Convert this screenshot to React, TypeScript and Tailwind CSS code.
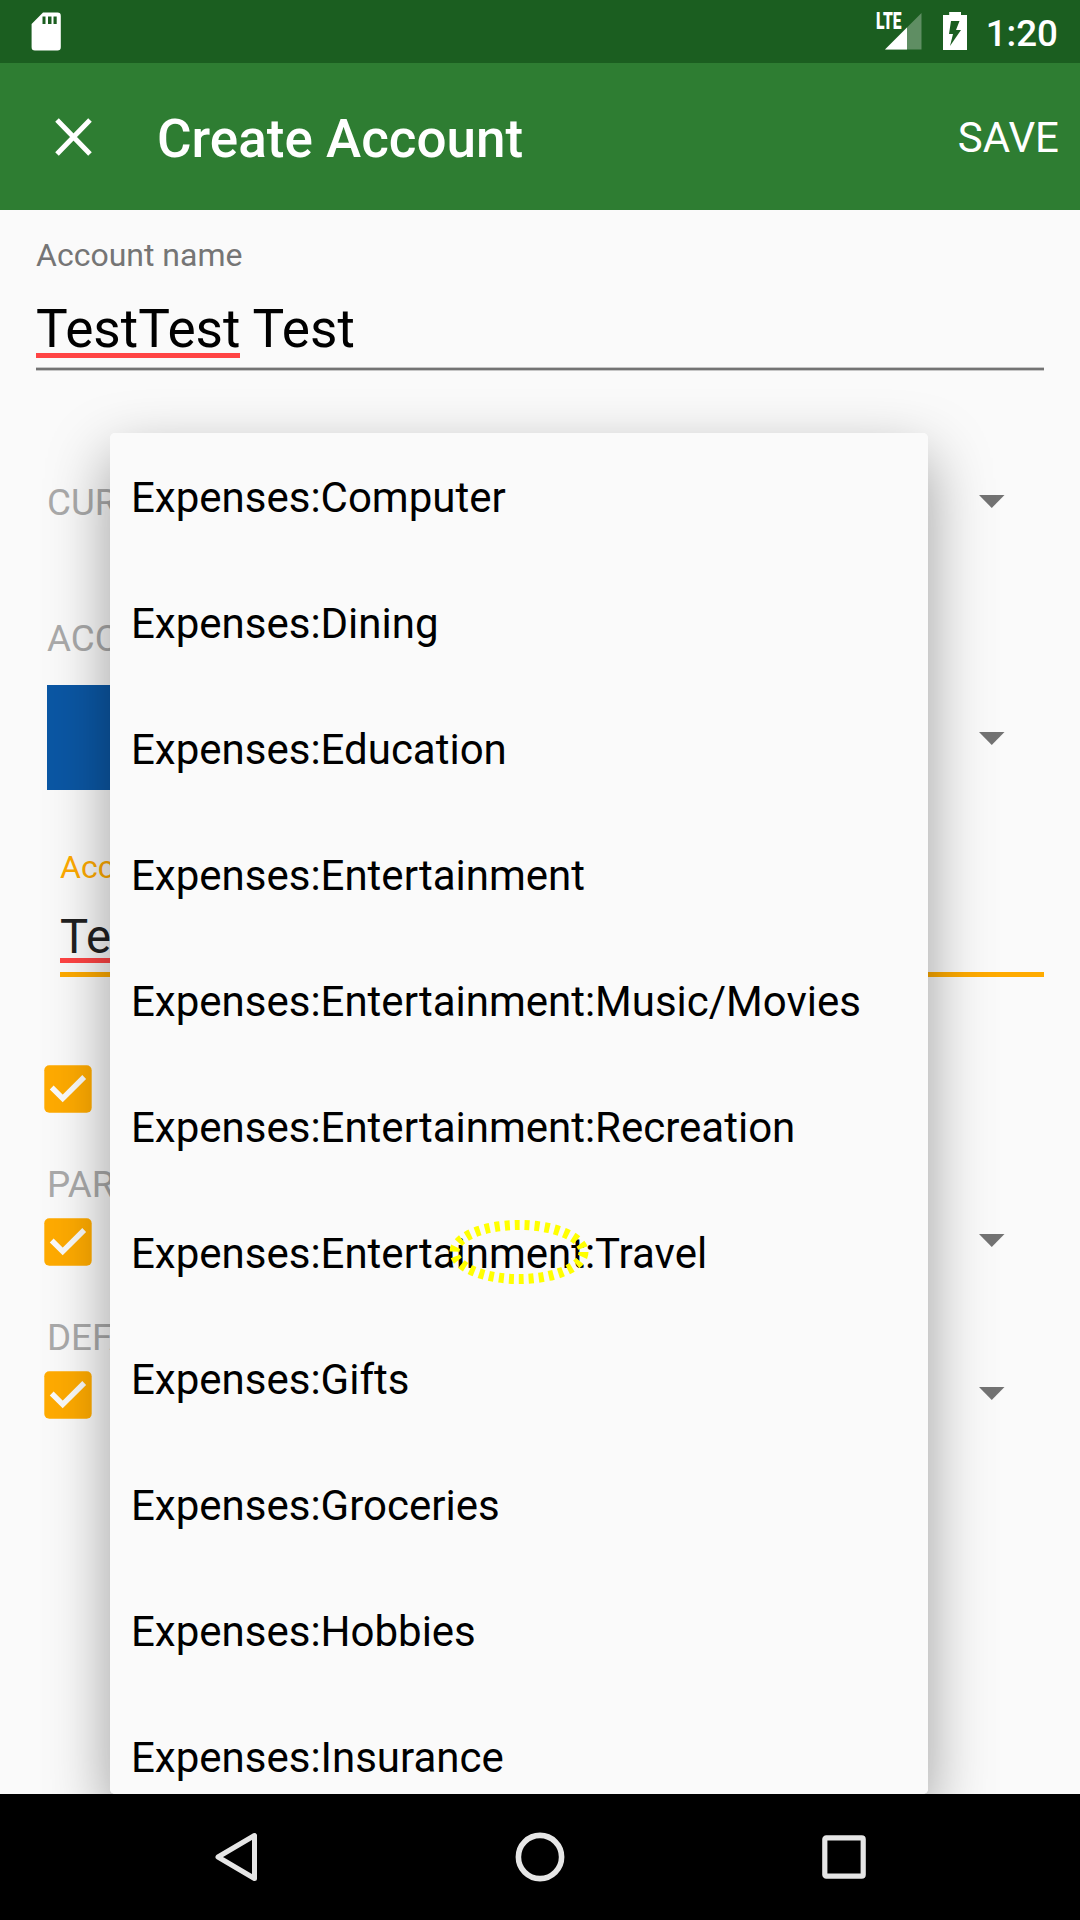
import React from "react";

const accounts = [
  "Expenses:Computer",
  "Expenses:Dining",
  "Expenses:Education",
  "Expenses:Entertainment",
  "Expenses:Entertainment:Music/Movies",
  "Expenses:Entertainment:Recreation",
  "Expenses:Entertainment:Travel",
  "Expenses:Gifts",
  "Expenses:Groceries",
  "Expenses:Hobbies",
  "Expenses:Insurance",
];

function StatusBar() {
  return (
    <div className="flex h-[63px] shrink-0 items-start bg-[#1b5e20] text-white">
      <svg className="ml-[31px] mt-[12px]" width="31" height="39" viewBox="0 0 31 39">
        <path
          fillRule="evenodd"
          fill="#fff"
          d="M12 .6H26.500a3.300 3.300 0 0 1 3.300 3.300V35.200a3.300 3.300 0 0 1-3.300 3.300H3.900a3.300 3.300 0 0 1-3.300-3.300V12ZM11.500 4.500V12H14.500V4.500ZM17 4.500V12h3.500V4.500ZM22.500 4.500V12H25.700V4.500Z"
        />
      </svg>
      <div className="relative ml-auto mr-[21px] mt-[12px] h-[39px] w-[46px]">
        <svg width="46" height="39" viewBox="0 0 46 39">
          <path d="M45.500 1V37.500H9Z" fill="#fff" fillOpacity=".3" />
          <path d="M31 15.500V37.500H9Z" fill="#fff" />
        </svg>
        <span className="absolute left-0 top-0 origin-left scale-x-[0.68] text-[23px] font-black leading-[20px]">LTE</span>
      </div>
      <svg className="mt-[12px]" width="24" height="38" viewBox="0 0 24 38">
        <path
          fillRule="evenodd"
          fill="#fff"
          d="M6.200 0H18V3H24V38H0V3H6.200ZM8 9 6 22H10L7 34 18 18H13L16.500 9Z"
        />
      </svg>
      <span className="ml-[19px] mr-[22px] mt-[12px] text-[36.750px] font-medium leading-[43px]">1:20</span>
    </div>
  );
}

function Caret({ className = "" }: { className?: string }) {
  return (
    <svg className={"shrink-0 " + className} width="26" height="13" viewBox="0 0 26 13">
      <path d="M0 0H25.500L12.750 13Z" fill="#737373" />
    </svg>
  );
}

function Checkbox() {
  return (
    <svg className="ml-[44px] block" width="48" height="48" viewBox="0 0 48 48">
      <rect x=".3" y=".3" width="47.400" height="47.400" rx="5" fill="#ffab00" />
      <path d="M7.700 22.500 18.700 33.500 40.200 12" fill="none" stroke="#fafafa" strokeWidth="5.400" />
    </svg>
  );
}

function SectionLabel({ children }: { children: React.ReactNode }) {
  return <div className="text-[36.750px] leading-[44px] text-[#aaaaaa]">{children}</div>;
}

function Form() {
  return (
    <div className="flex h-full flex-col">
      <div className="mx-[36px] mt-[26px] text-[32px] leading-[38px] text-[#757575]">Account name</div>
      <div className="mx-[36px] mt-[24px] h-[71px] text-[53.200px] leading-[62px] text-black">
        <span className="relative inline-block">
          TestTest
          <span className="absolute left-0 top-[55px] h-[5px] w-full bg-[#ff4444]" />
        </span>{" "}
        Test
      </div>
      <div className="mx-[36px] -mt-[2px] h-[4px] border-y border-[#c6c6c6] bg-[#737373]" />

      <div className="mt-[110px] flex h-[44px] items-center justify-between pl-[47px] pr-[75px]">
        <SectionLabel>CUR</SectionLabel>
        <Caret className="mb-[3px]" />
      </div>

      <div className="mt-[92px] pl-[47px]">
        <SectionLabel>ACC</SectionLabel>
      </div>
      <div className="mt-[24px] flex h-[105px] items-center justify-between pl-[47px] pr-[75px]">
        <div className="h-full w-[140px] bg-[#0b57a4]" />
        <Caret className="mt-[2px]" />
      </div>

      <div className="ml-[60px] mt-[58px] text-[32px] leading-[38px] text-[#ffab00]">Acc</div>
      <div className="relative ml-[60px] mt-[23px] h-[63px] text-[47.250px] leading-[56px] text-[#212121]">
        Te
        <span className="absolute left-0 top-[49px] h-[5px] w-[100px] bg-[#ff4444]" />
      </div>
      <div className="ml-[60px] mr-[36px] h-[5px] bg-[#ffab00]" />

      <div className="mt-[88px]">
        <Checkbox />
      </div>
      <div className="mt-[50px] pl-[47px]">
        <SectionLabel>PAR</SectionLabel>
      </div>
      <div className="mt-[11px] flex h-[48px] items-center justify-between pr-[75px]">
        <Checkbox />
        <Caret className="mb-[3px]" />
      </div>
      <div className="mt-[50px] pl-[47px]">
        <SectionLabel>DEFA</SectionLabel>
      </div>
      <div className="mt-[11px] flex h-[48px] items-center justify-between pr-[75px]">
        <Checkbox />
        <Caret className="mb-[3px]" />
      </div>
    </div>
  );
}

function AccountMenu() {
  return (
    <div className="absolute left-[110px] top-[223px] h-[1361px] w-[818px] overflow-hidden rounded-[5px] bg-[#fafafa] pt-px">
      {accounts.map((name) => (
        <div key={name} className="flex h-[126px] items-center whitespace-nowrap pl-[21px] text-[42px] text-black">
          {name}
        </div>
      ))}
    </div>
  );
}

export default function App() {
  return (
    <div className="flex h-[1920px] w-[1080px] flex-col overflow-hidden bg-[#fafafa] font-['Roboto',sans-serif]">
      <StatusBar />
      <header className="flex h-[147px] shrink-0 items-center bg-[#2e7d32] text-white">
        <svg className="ml-[55px]" width="37" height="38" viewBox="0 0 37 38">
          <path d="M2 2 35 36M35 2 2 36" stroke="#fff" strokeWidth="5" />
        </svg>
        <h1 className="ml-[65px] mt-[4px] text-[53px] font-medium leading-[62px]">Create Account</h1>
        <span className="ml-auto mr-[21px] mt-[2px] text-[42px] leading-[50px]">SAVE</span>
      </header>
      <main className="relative h-[1584px] shrink-0 overflow-hidden">
        <Form />
        <div className="absolute left-[110px] top-[223px] h-[1361px] w-[818px] rounded-[5px] shadow-[0_24px_62px_rgba(0,0,0,0.38)]" />
        <AccountMenu />
        <svg className="absolute left-[444px] top-[1004px]" width="150" height="76" viewBox="0 0 150 76">
          <ellipse cx="75" cy="38" rx="64.500" ry="27" fill="none" stroke="#ffff00" strokeWidth="10" strokeDasharray="5 5" />
        </svg>
      </main>
      <nav className="flex h-[126px] shrink-0 items-center bg-black">
        <svg className="ml-[214px]" width="44" height="50" viewBox="0 0 44 50">
          <path d="M40.500 3.500V46.500L4 25Z" fill="none" stroke="#e6e6e6" strokeWidth="5" strokeLinejoin="round" />
        </svg>
        <svg className="ml-[257px]" width="50" height="50" viewBox="0 0 50 50">
          <circle cx="25" cy="25" r="21.600" fill="none" stroke="#e6e6e6" strokeWidth="5.600" />
        </svg>
        <svg className="ml-[257px]" width="44" height="44" viewBox="0 0 44 44">
          <rect x="2.800" y="2.800" width="38.400" height="38.400" rx="1.500" fill="none" stroke="#e6e6e6" strokeWidth="5.200" />
        </svg>
      </nav>
    </div>
  );
}
